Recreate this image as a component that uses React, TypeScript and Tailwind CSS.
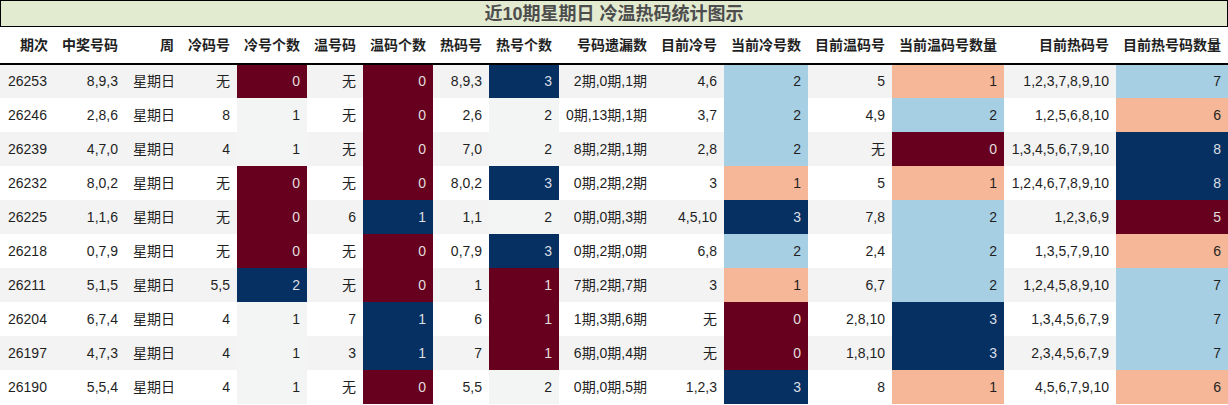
import React from "react";

type Row = (string | number)[];

const headers = [
  "期次", "中奖号码", "周", "冷码号", "冷号个数", "温号码", "温码个数", "热码号", "热号个数",
  "号码遗漏数", "目前冷号", "当前冷号数", "目前温码号", "当前温码号数量", "目前热码号", "目前热号码数量",
];

const widths = [55, 70, 56, 56, 70, 56, 70, 56, 70, 95, 70, 84, 84, 112, 112, 112];

const rows: Row[] = [
  ["26253", "8,9,3", "星期日", "无", 0, "无", 0, "8,9,3", 3, "2期,0期,1期", "4,6", 2, "5", 1, "1,2,3,7,8,9,10", 7],
  ["26246", "2,8,6", "星期日", "8", 1, "无", 0, "2,6", 2, "0期,13期,1期", "3,7", 2, "4,9", 2, "1,2,5,6,8,10", 6],
  ["26239", "4,7,0", "星期日", "4", 1, "无", 0, "7,0", 2, "8期,2期,1期", "2,8", 2, "无", 0, "1,3,4,5,6,7,9,10", 8],
  ["26232", "8,0,2", "星期日", "无", 0, "无", 0, "8,0,2", 3, "0期,2期,2期", "3", 1, "5", 1, "1,2,4,6,7,8,9,10", 8],
  ["26225", "1,1,6", "星期日", "无", 0, "6", 1, "1,1", 2, "0期,0期,3期", "4,5,10", 3, "7,8", 2, "1,2,3,6,9", 5],
  ["26218", "0,7,9", "星期日", "无", 0, "无", 0, "0,7,9", 3, "0期,2期,0期", "6,8", 2, "2,4", 2, "1,3,5,7,9,10", 6],
  ["26211", "5,1,5", "星期日", "5,5", 2, "无", 0, "1", 1, "7期,2期,7期", "3", 1, "6,7", 2, "1,2,4,5,8,9,10", 7],
  ["26204", "6,7,4", "星期日", "4", 1, "7", 1, "6", 1, "1期,3期,6期", "无", 0, "2,8,10", 3, "1,3,4,5,6,7,9", 7],
  ["26197", "4,7,3", "星期日", "4", 1, "3", 1, "7", 1, "6期,0期,4期", "无", 0, "1,8,10", 3, "2,3,4,5,6,7,9", 7],
  ["26190", "5,5,4", "星期日", "4", 1, "无", 0, "5,5", 2, "0期,0期,5期", "1,2,3", 3, "8", 1, "4,5,6,7,9,10", 6],
];

// column index -> [min, max] for the colour scale
const scales: Record<number, [number, number]> = {
  4: [0, 2],
  6: [0, 1],
  8: [1, 3],
  11: [0, 3],
  13: [0, 3],
  15: [5, 8],
};

function heat(t: number) {
  if (t <= 0.01) return "bg-[#67001f] text-[#e2dcdc]";
  if (t < 0.4) return "bg-[#f6b799] text-[#1f1f1f]";
  if (t < 0.6) return "bg-[#f3f5f5] text-[#1f1f1f]";
  if (t < 0.99) return "bg-[#a7cfe4] text-[#1f1f1f]";
  return "bg-[#053061] text-[#dcdfe4]";
}

export default function App() {
  return (
    <div className="w-[1228px] h-[405px] bg-white overflow-hidden font-['Liberation_Sans','Noto_Sans_CJK_SC',sans-serif] text-[14px] text-[#1f1f1f]">
      <div className="h-[27px] border border-black bg-[#e2ead0] flex items-center justify-center text-[18px] font-bold text-[#4d4d4d] leading-none">
        近10期星期日 冷温热码统计图示
      </div>
      <table className="table-fixed border-collapse w-[1228px]">
        <colgroup>
          {widths.map((w, i) => (
            <col key={i} style={{ width: w }} />
          ))}
        </colgroup>
        <thead>
          <tr className="h-[37px] border-b-2 border-black">
            {headers.map(h => (
              <th key={h} className="px-[7px] text-right font-bold whitespace-nowrap p-0 pr-[7px]">
                {h}
              </th>
            ))}
          </tr>
        </thead>
        <tbody>
          {rows.map((r, ri) => (
            <tr key={ri} className={`h-[34px] ${ri % 2 === 0 ? "bg-[#f3f3f3]" : "bg-white"}`}>
              {r.map((v, ci) => {
                const sc = scales[ci];
                const color = sc ? heat((Number(v) - sc[0]) / (sc[1] - sc[0])) : "";
                const align = ci === 0 || ci === 2 ? "text-left pl-[8px]" : "text-right pr-[7px]";
                return (
                  <td key={ci} className={`p-0 whitespace-nowrap ${align} ${color}`}>
                    {v}
                  </td>
                );
              })}
            </tr>
          ))}
        </tbody>
      </table>
    </div>
  );
}
